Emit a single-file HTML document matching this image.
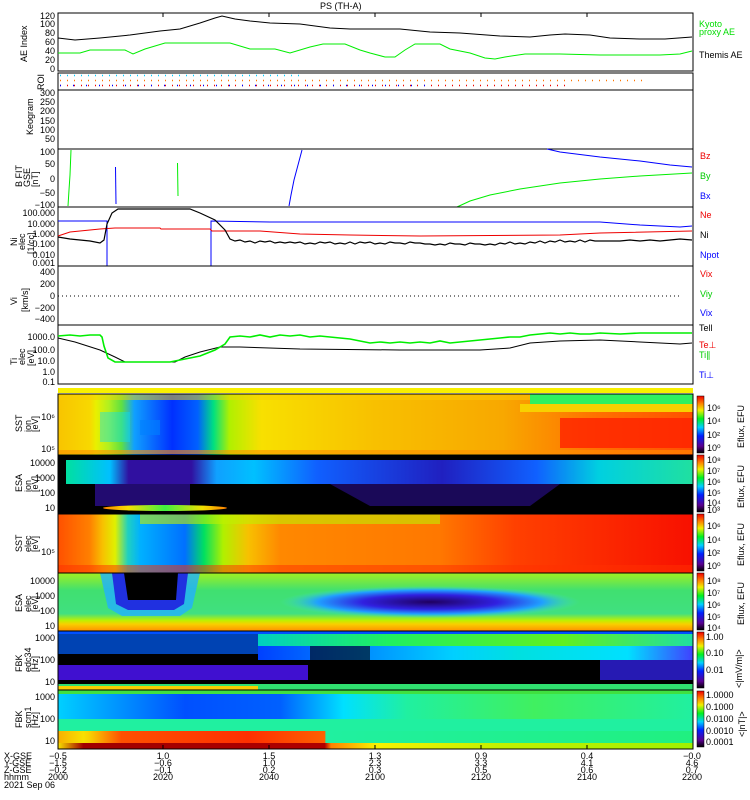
<!DOCTYPE html>
<html><head><meta charset="utf-8"><style>
html,body{margin:0;padding:0;background:#fff;width:750px;height:800px;overflow:hidden}
svg{display:block}
text{font-family:"Liberation Sans",sans-serif;font-size:9px}
</style></head><body>
<svg width="750" height="800" viewBox="0 0 750 800" xmlns="http://www.w3.org/2000/svg">
<defs>
<linearGradient id="rb" x1="0" y1="1" x2="0" y2="0">
<stop offset="0" stop-color="#000"/><stop offset=".12" stop-color="#5a0090"/><stop offset=".3" stop-color="#0020ff"/><stop offset=".45" stop-color="#00d0ff"/><stop offset=".6" stop-color="#00f020"/><stop offset=".75" stop-color="#f0f000"/><stop offset=".87" stop-color="#ff8000"/><stop offset="1" stop-color="#f00000"/></linearGradient>
<linearGradient id="sst1" x1="0" x2="1">
<stop offset="0" stop-color="#f8c400"/><stop offset=".05" stop-color="#f8d800"/><stop offset=".06" stop-color="#e8f000"/><stop offset=".08" stop-color="#b0f020"/><stop offset=".1" stop-color="#60e040"/><stop offset=".12" stop-color="#10a0ff"/><stop offset=".18" stop-color="#0030ff"/><stop offset=".22" stop-color="#0060ff"/><stop offset=".245" stop-color="#00e080"/><stop offset=".27" stop-color="#b0f000"/><stop offset=".32" stop-color="#f8e000"/><stop offset=".5" stop-color="#f8c000"/><stop offset=".7" stop-color="#f8a800"/><stop offset=".85" stop-color="#ff7000"/><stop offset="1" stop-color="#ff5000"/></linearGradient>
<linearGradient id="sst2" x1="0" x2="1">
<stop offset="0" stop-color="#ff5000"/><stop offset=".05" stop-color="#ff8000"/><stop offset=".07" stop-color="#f8c000"/><stop offset=".09" stop-color="#e0f000"/><stop offset=".11" stop-color="#20d0c0"/><stop offset=".13" stop-color="#00b0ff"/><stop offset=".2" stop-color="#0070ff"/><stop offset=".23" stop-color="#00e060"/><stop offset=".26" stop-color="#b0f000"/><stop offset=".3" stop-color="#f8c000"/><stop offset=".35" stop-color="#ff8800"/><stop offset=".6" stop-color="#ff7800"/><stop offset=".72" stop-color="#ff4000"/><stop offset="1" stop-color="#f81000"/></linearGradient>
<linearGradient id="esae" x1="0" y1="0" x2="0" y2="1">
<stop offset="0" stop-color="#a0f020"/><stop offset=".3" stop-color="#40e070"/><stop offset=".7" stop-color="#40e080"/><stop offset=".82" stop-color="#c0f000"/><stop offset=".88" stop-color="#f8d000"/><stop offset="1" stop-color="#ff9000"/></linearGradient>
<radialGradient id="ell" cx=".5" cy=".5" r=".5">
<stop offset="0" stop-color="#200060"/><stop offset=".45" stop-color="#3020e0"/><stop offset=".75" stop-color="#20a0ff"/><stop offset="1" stop-color="#40e0c0" stop-opacity="0"/></radialGradient>
<linearGradient id="scmb" x1="0" x2="1">
<stop offset="0" stop-color="#f8b000"/><stop offset=".04" stop-color="#f8e000"/><stop offset=".05" stop-color="#f8d000"/><stop offset=".1" stop-color="#ff5000"/><stop offset=".3" stop-color="#ff3000"/><stop offset=".42" stop-color="#ff6000"/><stop offset=".422" stop-color="#20f0a0"/><stop offset="1" stop-color="#20f080"/></linearGradient>
<linearGradient id="scmc" x1="0" x2="1">
<stop offset="0" stop-color="#f8e000"/><stop offset=".04" stop-color="#a00000"/><stop offset=".42" stop-color="#b00000"/><stop offset=".43" stop-color="#ff8000"/><stop offset=".5" stop-color="#f8f000"/><stop offset=".7" stop-color="#c0f000"/><stop offset="1" stop-color="#a0f000"/></linearGradient>
<linearGradient id="scma" x1="0" x2="1">
<stop offset="0" stop-color="#00d0ff"/><stop offset=".2" stop-color="#0050ff"/><stop offset=".35" stop-color="#0060ff"/><stop offset=".45" stop-color="#00e0ff"/><stop offset=".55" stop-color="#20f0a0"/><stop offset=".75" stop-color="#40f060"/><stop offset="1" stop-color="#20f0a0"/></linearGradient>
<linearGradient id="edca" x1="0" x2="1">
<stop offset="0" stop-color="#0040ff"/><stop offset=".3" stop-color="#00a0ff"/><stop offset=".45" stop-color="#00d0ff"/><stop offset=".6" stop-color="#00e0e0"/><stop offset=".85" stop-color="#00e0ff"/><stop offset="1" stop-color="#4040ff"/></linearGradient>
<linearGradient id="edct" x1="0" x2="1">
<stop offset="0" stop-color="#00d0c0"/><stop offset=".3" stop-color="#20f060"/><stop offset=".7" stop-color="#60f020"/><stop offset="1" stop-color="#20e0a0"/></linearGradient>
<linearGradient id="esai" x1="0" x2="1">
<stop offset="0" stop-color="#00e0a0"/><stop offset=".07" stop-color="#00c0ff"/><stop offset=".1" stop-color="#3010a0"/><stop offset=".2" stop-color="#3010a0"/><stop offset=".24" stop-color="#10a0ff"/><stop offset=".3" stop-color="#00c0ff"/><stop offset=".4" stop-color="#1060ff"/><stop offset=".6" stop-color="#2020c0"/><stop offset=".75" stop-color="#1060ff"/><stop offset=".85" stop-color="#00d0e0"/><stop offset="1" stop-color="#20e0a0"/></linearGradient>
<linearGradient id="esab" x1="0" x2="1">
<stop offset="0" stop-color="#ff8000"/><stop offset=".2" stop-color="#f8e000"/><stop offset=".5" stop-color="#40f040"/><stop offset=".8" stop-color="#f0e000"/><stop offset="1" stop-color="#ff8000"/></linearGradient>
</defs>

<text x="320" y="9" font-size="10">PS (TH-A)</text>

<!-- AE panel -->
<rect x="58" y="13" width="635" height="58" fill="#fff" stroke="#000"/>
<polyline fill="none" stroke="#000" points="58,38 75,40 100,38 130,35 160,31 180,29 200,23 215,18 222,16 235,19 250,21 270,23 300,24 330,28 350,29 400,29 430,32 460,33 500,36 530,37 550,35 565,34 590,35 610,38 640,39 665,39 692,37"/>
<polyline fill="none" stroke="#0e0" points="58,53 80,53 90,50 125,50 133,54 145,49 165,43 230,43 240,46 250,49 275,49 290,53 310,47 323,44 345,44 360,50 370,53 385,57 395,57 405,50 415,44 440,44 450,49 470,53 485,58 495,59 505,57 525,54 560,54 600,55 660,55 680,54 692,51"/>
<text x="27" y="62" transform="rotate(-90 27 62)" font-size="8">AE Index</text>
<g font-size="8" text-anchor="end"><text x="55" y="19">120</text><text x="55" y="27">100</text><text x="55" y="36">80</text><text x="55" y="45">60</text><text x="55" y="54">40</text><text x="55" y="63">20</text><text x="55" y="72">0</text></g>
<text x="699" y="27" fill="#0d0" font-size="8">Kyoto</text><text x="699" y="35" fill="#0d0" font-size="8">proxy AE</text>
<text x="699" y="58" font-size="8">Themis AE</text>

<!-- ROI -->
<rect x="58" y="73" width="635" height="17" fill="#fff" stroke="#000"/>
<line x1="60" y1="75.5" x2="300" y2="75.5" stroke="#0cf" stroke-width="1.5" stroke-dasharray="1,6"/>
<line x1="60" y1="80.5" x2="645" y2="80.5" stroke="#f70" stroke-width="1.5" stroke-dasharray="1,6"/>
<line x1="60" y1="85.5" x2="565" y2="85.5" stroke="#e00" stroke-width="1.5" stroke-dasharray="1,6"/>
<line x1="60" y1="85.5" x2="430" y2="85.5" stroke="#00f" stroke-width="1.5" stroke-dasharray="1,12"/>
<text x="44" y="90" transform="rotate(-90 44 90)" font-size="8">ROI</text>

<!-- Keogram -->
<rect x="58" y="90" width="635" height="59" fill="#fff" stroke="#000"/>
<text x="33" y="135" transform="rotate(-90 33 135)" font-size="8">Keogram</text>
<g font-size="8" text-anchor="end"><text x="55" y="96">300</text><text x="55" y="105">250</text><text x="55" y="114">200</text><text x="55" y="124">150</text><text x="55" y="133">100</text><text x="55" y="142">50</text></g>

<!-- B panel -->
<rect x="58" y="149" width="635" height="58" fill="#fff" stroke="#000"/>
<polyline fill="none" stroke="#0e0" points="68,206 69,190 70,175 71,150"/>
<line x1="115.5" y1="167" x2="116" y2="204" stroke="#00f"/>
<line x1="177.5" y1="163" x2="178" y2="196" stroke="#0e0"/>
<polyline fill="none" stroke="#00f" points="289,206 291,195 294,180 298,165 302,150"/>
<polyline fill="none" stroke="#00f" points="547,149 560,152 600,157 640,161 670,165 692,167"/>
<polyline fill="none" stroke="#0e0" points="457,207 470,201 490,195 520,189 560,183 600,179 640,176 692,173"/>
<text x="22" y="187" transform="rotate(-90 22 187)" font-size="8">B FIT</text>
<text x="30" y="187" transform="rotate(-90 30 187)" font-size="7">GSE</text>
<text x="38" y="187" transform="rotate(-90 38 187)" font-size="7">[nT]</text>
<g font-size="8" text-anchor="end"><text x="55" y="155">100</text><text x="55" y="167">50</text><text x="55" y="182">0</text><text x="55" y="196">−50</text><text x="55" y="208">−100</text></g>
<text x="700" y="159" fill="#e00" font-size="8">Bz</text><text x="700" y="179" fill="#0c0" font-size="8">By</text><text x="700" y="199" fill="#00f" font-size="8">Bx</text>

<!-- Density -->
<rect x="58" y="207" width="635" height="59" fill="#fff" stroke="#000"/>
<polyline fill="none" stroke="#00f" points="58,221 107,221 107,266 211,266 211,221 270,222 600,222 640,225 680,227 692,226"/>
<polyline fill="none" stroke="#e00" points="58,236 70,232 100,229 115,228 160,228 161,229 210,229 212,231 260,231 300,234 350,235 420,236 560,235 600,233 692,231"/>
<polyline fill="none" stroke="#000" stroke-width="1.2" points="58,237 70,239 80,240 90,241 100,243 104,240 107,224 112,213 118,209 190,209 200,213 215,220 225,230 230,239 235,241 240,240 245,242 250,241 255,243 260,241 265,242 270,241 275,243 280,242 285,243 290,242 295,243 300,242 305,244 310,243 315,244 320,242 325,243 330,242 335,244 340,243 345,244 350,242 355,244 360,242 365,243 370,242 375,244 380,243 385,244 390,242 395,243 400,243 405,244 410,242 415,243 420,243 425,244 430,244 435,245 440,244 445,245 450,243 455,244 460,244 465,245 470,243 475,244 480,244 485,245 490,244 495,245 500,243 505,244 510,242 515,244 520,243 525,244 530,242 535,243 540,241 545,243 550,241 555,242 560,240 565,242 570,241 575,242 580,240 585,242 590,240 595,241 600,241 610,241 620,241 630,240 640,241 650,240 660,241 670,240 680,239 692,240"/>
<text x="17" y="246" transform="rotate(-90 17 246)" font-size="7">Ni</text>
<text x="25" y="250" transform="rotate(-90 25 250)" font-size="7">elec</text>
<text x="34" y="254" transform="rotate(-90 34 254)" font-size="7">[1/cc]</text>
<g font-size="8" text-anchor="end"><text x="55" y="216">100.000</text><text x="55" y="227">10.000</text><text x="55" y="237">1.000</text><text x="55" y="247">0.100</text><text x="55" y="258">0.010</text><text x="55" y="266">0.001</text></g>
<text x="700" y="218" fill="#e00" font-size="8">Ne</text><text x="700" y="238" font-size="8">Ni</text><text x="700" y="258" fill="#00f" font-size="8">Npot</text>

<!-- Velocity -->
<rect x="58" y="266" width="635" height="59" fill="#fff" stroke="#000"/>
<line x1="58" y1="296" x2="680" y2="296" stroke="#000" stroke-dasharray="1,3"/>
<text x="17" y="305" transform="rotate(-90 17 305)" font-size="8">Vi</text>
<text x="28" y="312" transform="rotate(-90 28 312)" font-size="7">[km/s]</text>
<g font-size="8" text-anchor="end"><text x="55" y="275">400</text><text x="55" y="287">200</text><text x="55" y="299">0</text><text x="55" y="311">−200</text><text x="55" y="322">−400</text></g>
<text x="700" y="277" fill="#e00" font-size="8">Vix</text><text x="700" y="297" fill="#0c0" font-size="8">Viy</text><text x="700" y="316" fill="#00f" font-size="8">Vix</text>

<!-- Temperature -->
<rect x="58" y="325" width="635" height="59" fill="#fff" stroke="#000"/>
<polyline fill="none" stroke="#000" points="58,338 75,342 100,350 115,357 125,362 175,362 185,357 200,352 220,347 240,347 300,349 400,350 480,350 510,348 530,343 560,341 600,340 640,342 680,344 692,343"/>
<polyline fill="none" stroke="#0e0" stroke-width="1.6" points="58,336 70,335 80,336 90,335 100,335 102,337 104,346 108,358 115,362 170,362 180,360 200,356 215,350 225,344 230,337 240,336 250,337 260,335 270,337 280,335 290,336 300,335 310,337 320,336 330,337 340,338 350,339 360,341 370,343 380,342 390,343 400,342 410,343 420,342 430,343 440,341 450,343 460,342 470,341 480,340 490,339 500,338 510,337 520,337 530,335 540,334 550,333 560,334 570,333 580,334 590,334 600,333 620,334 640,333 660,333 692,333"/>
<text x="17" y="365" transform="rotate(-90 17 365)" font-size="8">Ti</text>
<text x="25" y="365" transform="rotate(-90 25 365)" font-size="7">elec</text>
<text x="34" y="366" transform="rotate(-90 34 366)" font-size="7">[eV]</text>
<g font-size="8" text-anchor="end"><text x="55" y="340">1000.0</text><text x="55" y="353">100.0</text><text x="55" y="364">10.0</text><text x="55" y="375">1.0</text><text x="55" y="385">0.1</text></g>
<text x="699" y="331" font-size="8">Tell</text><text x="699" y="348" fill="#e00" font-size="8">Te⊥</text><text x="699" y="358" fill="#0c0" font-size="8">Ti∥</text><text x="699" y="378" fill="#00f" font-size="8">Ti⊥</text>

<!-- yellow bar -->
<rect x="58" y="388" width="635" height="5" fill="#f8f000"/>

<!-- SST ion -->
<rect x="58" y="394" width="635" height="61" fill="url(#sst1)"/>
<rect x="58" y="394" width="635" height="6" fill="#f8d000" opacity=".5"/>
<rect x="530" y="394" width="163" height="10" fill="#30f060"/>
<rect x="520" y="404" width="173" height="8" fill="#f8d000"/>
<rect x="560" y="418" width="133" height="30" fill="#ff2000" opacity=".8"/>
<rect x="100" y="412" width="30" height="30" fill="#00e0ff" opacity=".4"/>
<rect x="140" y="420" width="20" height="15" fill="#0080ff" opacity=".6"/>
<rect x="58" y="450" width="635" height="4" fill="#ff9000" opacity=".6"/>
<!-- ESA ion -->
<rect x="58" y="455" width="635" height="59" fill="#000"/>
<rect x="66" y="460" width="627" height="24" fill="url(#esai)"/>
<rect x="95" y="484" width="95" height="22" fill="#3010a0" opacity=".7"/>
<polygon points="330,484 560,484 530,506 370,506" fill="#3010a0" opacity=".55"/>
<ellipse cx="165" cy="508" rx="62" ry="3" fill="url(#esab)"/>
<!-- SST elec -->
<rect x="58" y="514" width="635" height="59" fill="url(#sst2)"/>
<rect x="140" y="514" width="300" height="10" fill="#c0f000" opacity=".6"/>
<rect x="58" y="565" width="635" height="8" fill="#ff3000" opacity=".5"/>
<!-- ESA elec -->
<rect x="58" y="573" width="635" height="58" fill="url(#esae)"/>
<polygon points="100,573 200,573 192,608 180,616 122,616 108,608" fill="#20b0ff" opacity=".8"/>
<polygon points="112,573 188,573 184,604 174,610 128,610 116,604" fill="#2030e0"/>
<polygon points="124,573 178,573 176,600 128,600" fill="#000"/>
<ellipse cx="430" cy="602" rx="150" ry="16" fill="url(#ell)"/>
<!-- FBK edc -->
<rect x="58" y="631" width="635" height="59" fill="#000"/>
<rect x="58" y="631" width="635" height="3" fill="#0050ff"/>
<rect x="58" y="634" width="200" height="20" fill="#0060ff" opacity=".7"/>
<rect x="258" y="634" width="435" height="12" fill="url(#edct)"/>
<rect x="258" y="646" width="435" height="14" fill="url(#edca)"/>
<rect x="310" y="646" width="60" height="14" fill="#000" opacity=".6"/>
<rect x="58" y="665" width="250" height="15" fill="#4010d0"/>
<rect x="600" y="660" width="93" height="20" fill="#3020e0" opacity=".8"/>
<rect x="58" y="684" width="635" height="6" fill="#30e070"/>
<rect x="58" y="686" width="200" height="4" fill="#f8d000"/>
<!-- FBK scm -->
<rect x="58" y="690" width="635" height="59" fill="url(#scma)"/>
<rect x="58" y="690" width="635" height="4" fill="#40e040"/>
<rect x="58" y="719" width="635" height="12" fill="#20f0a0"/>
<rect x="58" y="731" width="635" height="12" fill="url(#scmb)"/>
<rect x="58" y="743" width="635" height="6" fill="url(#scmc)"/>

<!-- spectro frames -->
<g fill="none" stroke="#000">
<rect x="58" y="394" width="635" height="355"/>
<line x1="58" y1="455" x2="693" y2="455"/><line x1="58" y1="514" x2="693" y2="514"/><line x1="58" y1="573" x2="693" y2="573"/><line x1="58" y1="631" x2="693" y2="631"/><line x1="58" y1="690" x2="693" y2="690"/>
</g>
<g stroke="#000">
<line x1="163" y1="13" x2="163" y2="17"/><line x1="269" y1="13" x2="269" y2="17"/><line x1="375" y1="13" x2="375" y2="17"/><line x1="481" y1="13" x2="481" y2="17"/><line x1="587" y1="13" x2="587" y2="17"/>
<line x1="163" y1="745" x2="163" y2="749"/><line x1="269" y1="745" x2="269" y2="749"/><line x1="375" y1="745" x2="375" y2="749"/><line x1="481" y1="745" x2="481" y2="749"/><line x1="587" y1="745" x2="587" y2="749"/>
</g>

<g font-size="8">
<text x="22" y="432" transform="rotate(-90 22 432)">SST</text><text x="31" y="432" transform="rotate(-90 31 432)" font-size="7">ion</text><text x="38" y="432" transform="rotate(-90 38 432)" font-size="7">[eV]</text>
<text x="22" y="492" transform="rotate(-90 22 492)">ESA</text><text x="31" y="492" transform="rotate(-90 31 492)" font-size="7">ion</text><text x="38" y="492" transform="rotate(-90 38 492)" font-size="7">[eV]</text>
<text x="22" y="552" transform="rotate(-90 22 552)">SST</text><text x="31" y="552" transform="rotate(-90 31 552)" font-size="7">elec</text><text x="38" y="552" transform="rotate(-90 38 552)" font-size="7">[eV]</text>
<text x="22" y="612" transform="rotate(-90 22 612)">ESA</text><text x="31" y="612" transform="rotate(-90 31 612)" font-size="7">elec</text><text x="38" y="612" transform="rotate(-90 38 612)" font-size="7">[eV]</text>
<text x="22" y="672" transform="rotate(-90 22 672)">FBK</text><text x="31" y="672" transform="rotate(-90 31 672)" font-size="7">edc34</text><text x="38" y="672" transform="rotate(-90 38 672)" font-size="7">[Hz]</text>
<text x="22" y="728" transform="rotate(-90 22 728)">FBK</text><text x="31" y="728" transform="rotate(-90 31 728)" font-size="7">scm1</text><text x="38" y="728" transform="rotate(-90 38 728)" font-size="7">[Hz]</text>
</g>
<g font-size="8" text-anchor="end">
<text x="55" y="420">10⁶</text><text x="55" y="452">10⁵</text>
<text x="55" y="466">10000</text><text x="55" y="481">1000</text><text x="55" y="496">100</text><text x="55" y="511">10</text>
<text x="55" y="555">10⁵</text>
<text x="55" y="584">10000</text><text x="55" y="599">1000</text><text x="55" y="614">100</text><text x="55" y="629">10</text>
<text x="55" y="641">1000</text><text x="55" y="663">100</text><text x="55" y="685">10</text>
<text x="55" y="700">1000</text><text x="55" y="722">100</text><text x="55" y="744">10</text>
</g>

<g>
<rect x="697" y="396" width="7" height="57" fill="url(#rb)" stroke="#000" stroke-width=".5"/>
<rect x="697" y="455" width="7" height="57" fill="url(#rb)" stroke="#000" stroke-width=".5"/>
<rect x="697" y="514" width="7" height="57" fill="url(#rb)" stroke="#000" stroke-width=".5"/>
<rect x="697" y="573" width="7" height="57" fill="url(#rb)" stroke="#000" stroke-width=".5"/>
<rect x="697" y="632" width="7" height="56" fill="url(#rb)" stroke="#000" stroke-width=".5"/>
<rect x="697" y="691" width="7" height="56" fill="url(#rb)" stroke="#000" stroke-width=".5"/>
</g>
<g font-size="7">
<text x="707" y="411">10⁶</text><text x="707" y="424">10⁴</text><text x="707" y="438">10²</text><text x="707" y="451">10⁰</text>
<text x="707" y="463">10⁸</text><text x="707" y="474">10⁷</text><text x="707" y="485">10⁶</text><text x="707" y="496">10⁵</text><text x="707" y="506">10⁴</text><text x="707" y="513">10³</text>
<text x="707" y="529">10⁶</text><text x="707" y="543">10⁴</text><text x="707" y="556">10²</text><text x="707" y="569">10⁰</text>
<text x="707" y="584">10⁸</text><text x="707" y="596">10⁷</text><text x="707" y="608">10⁶</text><text x="707" y="620">10⁵</text><text x="707" y="631">10⁴</text>
<text x="706" y="640">1.00</text><text x="706" y="656">0.10</text><text x="706" y="673">0.01</text>
<text x="706" y="698">1.0000</text><text x="706" y="710">0.1000</text><text x="706" y="722">0.0100</text><text x="706" y="734">0.0010</text><text x="706" y="745">0.0001</text>
<text x="744" y="448" transform="rotate(-90 744 448)">Eflux, EFU</text>
<text x="744" y="508" transform="rotate(-90 744 508)">Eflux, EFU</text>
<text x="744" y="566" transform="rotate(-90 744 566)">Eflux, EFU</text>
<text x="744" y="625" transform="rotate(-90 744 625)">Eflux, EFU</text>
<text x="742" y="688" transform="rotate(-90 742 688)">&lt;|mV/m|&gt;</text>
<text x="745" y="737" transform="rotate(-90 745 737)">&lt;|nT|&gt;</text>
</g>

<g font-size="8">
<text x="4" y="759">X-GSE</text><text x="4" y="766">Y-GSE</text><text x="4" y="773">Z-GSE</text><text x="4" y="780">hhmm</text><text x="4" y="788">2021 Sep 06</text>
</g>
<g font-size="8" text-anchor="middle">
<text x="58" y="759">−0.5</text><text x="58" y="766">−1.5</text><text x="58" y="773">−0.2</text><text x="58" y="780">2000</text>
<text x="163" y="759">1.0</text><text x="163" y="766">−0.6</text><text x="163" y="773">−0.1</text><text x="163" y="780">2020</text>
<text x="269" y="759">1.5</text><text x="269" y="766">1.0</text><text x="269" y="773">0.2</text><text x="269" y="780">2040</text>
<text x="375" y="759">1.3</text><text x="375" y="766">2.3</text><text x="375" y="773">0.3</text><text x="375" y="780">2100</text>
<text x="481" y="759">0.9</text><text x="481" y="766">3.3</text><text x="481" y="773">0.5</text><text x="481" y="780">2120</text>
<text x="587" y="759">0.4</text><text x="587" y="766">4.1</text><text x="587" y="773">0.6</text><text x="587" y="780">2140</text>
<text x="692" y="759">−0.0</text><text x="692" y="766">4.6</text><text x="692" y="773">0.7</text><text x="692" y="780">2200</text>
</g>
</svg>
</body></html>
